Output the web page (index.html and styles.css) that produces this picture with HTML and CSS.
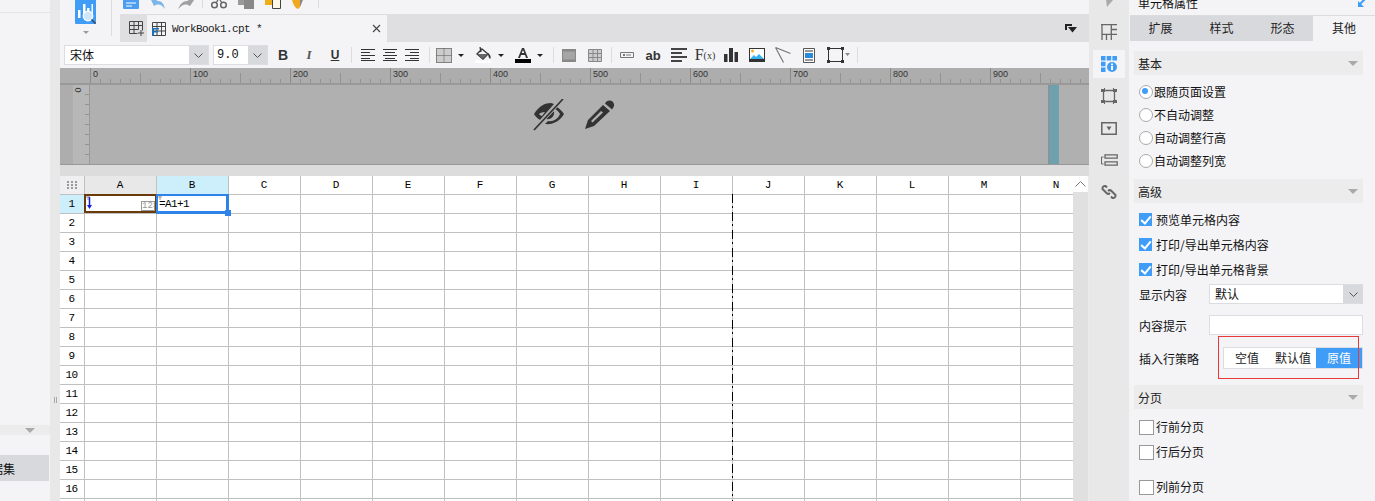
FILE: index.html
```html
<!DOCTYPE html>
<html lang="zh">
<head>
<meta charset="utf-8">
<title>WorkBook1.cpt</title>
<link rel="stylesheet" href="styles.css">
</head>
<body>
<div class="app">
  <aside class="left">
    <div class="left-top"></div>
    <div class="left-fill"></div>
    <div class="left-bar"><i class="tri"></i></div>
    <div class="left-gap"></div>
    <div class="left-item"><span>数据集</span></div>
  </aside>
  <div class="split"><i class="grip"></i></div>
  <main class="center">
    <header class="head">
      <div class="logo-col">
        <svg class="logo" width="21" height="35" viewBox="0 0 21 35"><path d="M0 0h21v24H1a1 1 0 0 1-1-1z" fill="#3f9cf7"/><path d="M3 10h2.500v8H3zM8 4h2.500v10H8zM12 8h2.500v4H12zM16.500 4H18v11h-1.500z" fill="#fff"/><circle cx="13" cy="16" r="4.800" fill="#cfe6fb" stroke="#fff" stroke-width="1.200"/><path d="M16.500 19.500l4 4" stroke="#444" stroke-width="1.500"/><path d="M8 31h6l-3 3z" fill="#999"/></svg>
      </div>
      <div class="head-right">
        <div class="quick">
          <svg class="q q1" width="16" height="9" viewBox="0 0 16 9"><path d="M0 0h16v8a1 1 0 0 1-1 1H1a1 1 0 0 1-1-1z" fill="#4a9df0"/><path d="M3 3h10M3 6h6" stroke="#fff"/></svg>
          <svg class="q q2" width="17" height="9" viewBox="0 0 17 9"><path d="M1 0h5l2 1c4 0 6 3 7 8-3-4-5-5-8-4.500L4 6z" fill="#7db5ea"/></svg>
          <svg class="q q3" width="18" height="9" viewBox="0 0 18 9"><path d="M17 0h-5l-2 1C6 1 3 4 1 9c4-4 6-5 9-4.500L13 6z" fill="#a0a0a0"/></svg>
          <i class="q-div"></i>
          <svg class="q q4" width="16" height="9" viewBox="0 0 16 9"><circle cx="3.500" cy="5" r="2.800" fill="none" stroke="#666" stroke-width="1.500"/><circle cx="12.500" cy="5" r="2.800" fill="none" stroke="#666" stroke-width="1.500"/><path d="M5 3l2-3M11 3L9 0" fill="none" stroke="#666" stroke-width="1.300"/></svg>
          <svg class="q q5" width="16" height="9" viewBox="0 0 16 9"><path d="M0 0h6v5H0z" fill="#999"/><path d="M6 0h10v9H6z" fill="#888"/></svg>
          <svg class="q q6" width="16" height="9" viewBox="0 0 16 9"><path d="M0 0h7v5H0z" fill="#f0ad1a"/><path d="M7.500 0v8.500h8V0" fill="#fff8e5" stroke="#444"/></svg>
          <svg class="q q7" width="12" height="9" viewBox="0 0 12 9"><path d="M0 0h8c1 4 1 7-2 9C3 8 1 4 0 0z" fill="#f0a81e"/><path d="M8 0h3L8 7z" fill="#888"/></svg>
          <i class="q-div q-div2"></i>
        </div>
        <div class="tabbar">
          <div class="newtab">
            <svg width="15" height="15" viewBox="0 0 15 15" fill="none" stroke="#444"><path d="M.5.5h13v9M.5.5v12h8M.5 4.500h13M.5 8.500h9M5 .5v12M9.500.5v8M12 9v6M9 12h6"/></svg>
          </div>
          <div class="tab">
            <svg width="14" height="14" viewBox="0 0 14 14" fill="none"><path d="M.5.5h13v13H.5zM.5 4.500h13M.5 9h13M5 .5v13M9.500.5v13" stroke="#444"/><path d="M0 6h7v1.500H2V9h4v1.500H2V14H0z" fill="#1d6fb8"/></svg>
            <span class="tab-name">WorkBook1.cpt *</span>
            <svg class="tab-x" width="9" height="9" viewBox="0 0 9 9"><path d="M1 1l7 7M8 1L1 8" stroke="#444" stroke-width="1.100"/></svg>
          </div>
          <svg class="tab-menu" width="12" height="9" viewBox="0 0 12 9"><path d="M0 0h7v2H2v4H0z" fill="#222"/><path d="M3 3h9L7.500 8.500z" fill="#222"/></svg>
        </div>
      </div>
    </header>

    <div class="toolbar">
      <div class="combo combo-font"><span class="combo-text">宋体</span><span class="combo-btn"><svg width="9" height="5" viewBox="0 0 9 5"><path d="M.5.5l4 4 4-4" fill="none" stroke="#555"/></svg></span></div>
      <div class="combo combo-size"><span class="combo-text mono">9.0</span><span class="combo-btn"><svg width="9" height="5" viewBox="0 0 9 5"><path d="M.5.5l4 4 4-4" fill="none" stroke="#555"/></svg></span></div>
      <span class="tool w26 t-b">B</span>
      <span class="tool w26 t-i">I</span>
      <span class="tool w26 t-u">U</span>
      <i class="tdiv d1"></i>
      <span class="tool w22"><svg width="14" height="12" viewBox="0 0 14 12"><path d="M0 .5h14M0 3.500h9M0 6.500h14M0 9.500h9M0 11.500h14" stroke="#333"/></svg></span>
      <span class="tool w22"><svg width="14" height="12" viewBox="0 0 14 12"><path d="M0 .5h14M2 3.500h10M0 6.500h14M2 9.500h10M0 11.500h14" stroke="#333"/></svg></span>
      <span class="tool w22"><svg width="14" height="12" viewBox="0 0 14 12"><path d="M0 .5h14M5 3.500h9M0 6.500h14M5 9.500h9M0 11.500h14" stroke="#333"/></svg></span>
      <i class="tdiv d2"></i>
      <span class="tool w38"><svg width="16" height="15" viewBox="0 0 16 15" fill="#ccc"><path d="M.5.5h15v14H.5z" stroke="#222" stroke-dasharray="1 1"/><path d="M.5 7.500h15M8 .5v14" stroke="#555" stroke-dasharray="1 1"/></svg><i class="caret"></i></span>
      <span class="tool w40"><svg width="17" height="16" viewBox="0 0 17 16"><path d="M7 2l6 5-5 5-6-5zM5 0l1 5" fill="none" stroke="#333" stroke-width="1.300"/><path d="M8 7h5l-5 5-6-5z" fill="#666"/><path d="M13 6c3 2 3 5 2 6-1-1-2-3-2-6z" fill="#333"/><path d="M0 13.500h16V16H0z" fill="#fff"/></svg><i class="caret"></i></span>
      <span class="tool w40"><svg width="16" height="16" viewBox="0 0 16 16"><path d="M3 11L7 1h2l4 10h-2l-1-3H6l-1 3zM6.700 6h2.600L8 3z" fill="#333"/><path d="M0 12h16v4H0z" fill="#000"/></svg><i class="caret"></i></span>
      <i class="tdiv d3"></i>
      <span class="tool w26"><svg width="14" height="13" viewBox="0 0 14 13"><path d="M0 0h14v13H0z" fill="#888"/><path d="M1 2.500h12v8H1z" fill="#a5a5a5"/></svg></span>
      <span class="tool w26"><svg width="14" height="13" viewBox="0 0 14 13"><path d="M.5.5h13v12H.5zM.5 4.500h13M.5 8.500h13M5 .5v12M9.500.5v12" fill="#ccc" stroke="#888"/></svg></span>
      <i class="tdiv d4"></i>
      <span class="tool w26"><svg width="14" height="6" viewBox="0 0 14 6"><path d="M.5.5h13v5H.5z" fill="none" stroke="#777"/><path d="M3 2h2v2H3zM6 2.500h5v1H6z" fill="#777"/></svg></span>
      <span class="tool w26 t-ab">ab</span>
      <span class="tool w26"><svg width="16" height="14" viewBox="0 0 16 14"><path d="M0 0h16v2H0zM0 4h11v2H0zM0 8h16v2H0zM0 12h11v2H0z" fill="#444"/></svg></span>
      <span class="tool w26 t-fx">F<small>(x)</small></span>
      <span class="tool w26"><svg width="14" height="14" viewBox="0 0 14 14"><path d="M0 6h3.500v8H0zM5 0h4v14H5zM10.500 4H14v10h-3.500z" fill="#333"/></svg></span>
      <span class="tool w26"><svg width="16" height="14" viewBox="0 0 16 14"><path d="M0 0h16v14H0z" fill="#333"/><path d="M1 1h14v10H1z" fill="#fff"/><path d="M1 11l4-4 2 2 3-3 5 5z" fill="#35b0ee"/><circle cx="3.500" cy="3" r="1.500" fill="#f0b323"/></svg></span>
      <span class="tool w26"><svg width="16" height="16" viewBox="0 0 16 16"><path d="M.5.500l15 6M.5.500l8 15" fill="none" stroke="#777" stroke-width="1.200"/></svg></span>
      <span class="tool w26"><svg width="12" height="15" viewBox="0 0 12 15"><path d="M.5.500h11v14H.5z" fill="#fff" stroke="#555"/><path d="M2 3h8M2 12h8" stroke="#333"/><path d="M2 5h8v5H2z" fill="#2a8bd8"/></svg></span>
      <span class="tool tool-last"><svg width="24" height="16" viewBox="0 0 24 16"><path d="M1.500 1.500h14v13h-14z" fill="none" stroke="#333"/><path d="M0 0h3v3H0zM14 0h3v3h-3zM0 13h3v3H0zM14 13h3v3h-3z" fill="#333"/><path d="M18 6h5l-2.500 3z" fill="#888"/></svg></span>
      <i class="tdiv"></i>
    </div>

    <div class="ruler">
      <span class="seg">0</span><span class="seg">100</span><span class="seg">200</span><span class="seg">300</span><span class="seg">400</span><span class="seg">500</span><span class="seg">600</span><span class="seg">700</span><span class="seg">800</span><span class="seg">900</span>
    </div>
    <div class="canvas">
      <div class="gutter"></div>
      <div class="vruler"><span>0</span></div>
      <div class="page">
        <svg width="32" height="32" viewBox="0 0 32 32"><path d="M1 15C6 7 12 4 18 4l3 1L7 21c-3-2-5-4-6-6zM6 15c1 1 2 2 3 2l3-4c-3 0-5 1-6 2z" fill="#333" fill-rule="evenodd"/><path d="M24 8c3 2 5 4 7 7-4 7-11 11-19 10l3-3c5 1 10-2 12-7-1-2-2-3-5-5z" fill="#333"/><path d="M21 12c1 5-3 9-8 8z" fill="#333"/><path d="M29 1L1 30" stroke="#b0b0b0" stroke-width="3.500"/><path d="M30 0L1 31" stroke="#333" stroke-width="1.700"/></svg>
        <svg width="31" height="31" viewBox="0 0 31 31"><path d="M22 3a4.500 4.500 0 0 1 7 6l-1 1.500-7-6zM19 6l7 6-16 15-9 3 3-9zM17 12L7 22l1.500 1.500L19 13.500z" fill="#333" fill-rule="evenodd"/></svg>
      </div>
      <div class="strip"></div>
      <div class="rest"></div>
    </div>
    <div class="band"></div>

    <div class="sheet">
      <div class="sheet-main">
        <div class="col-head">
          <div class="corner"><svg width="10" height="8" viewBox="0 0 10 8"><path d="M0 0h2v2H0zM4 0h2v2H4zM8 0h2v2H8zM0 3h2v2H0zM4 3h2v2H4zM8 3h2v2H8zM0 6h2v2H0zM4 6h2v2H4zM8 6h2v2H8z" fill="#999"/></svg></div>
          <div class="ch ch-a">A</div><div class="ch ch-b">B</div><div class="ch">C</div><div class="ch">D</div><div class="ch">E</div><div class="ch">F</div><div class="ch">G</div><div class="ch">H</div><div class="ch">I</div><div class="ch">J</div><div class="ch">K</div><div class="ch">L</div><div class="ch">M</div><div class="ch">N</div>
        </div>
        <div class="sheet-body">
          <div class="row-head">
            <div class="rh rh-on">1</div><div class="rh">2</div><div class="rh">3</div><div class="rh">4</div><div class="rh">5</div><div class="rh">6</div><div class="rh">7</div><div class="rh">8</div><div class="rh">9</div><div class="rh">10</div><div class="rh">11</div><div class="rh">12</div><div class="rh">13</div><div class="rh">14</div><div class="rh">15</div><div class="rh">16</div><div class="rh"></div>
          </div>
          <div class="cells">
            <div class="first-row">
              <div class="cell-a">
                <svg class="mark" width="4" height="4" viewBox="0 0 4 4"><path d="M0 1h4M2 0v4" stroke="#999"/></svg>
                <svg class="down" width="5" height="12" viewBox="0 0 5 12"><path d="M2.500 0v9" stroke="#1320d8" stroke-width="1.500"/><path d="M0 8h5l-2.500 4z" fill="#1320d8"/></svg>
                <span class="badge">123</span>
              </div>
              <div class="cell-b"><svg class="mark" width="4" height="4" viewBox="0 0 4 4"><path d="M0 1h4M2 0v4" stroke="#999"/></svg>=A1+1<i class="handle"></i></div>
            </div>
            <i class="page-break"></i>
          </div>
        </div>
      </div>
      <div class="scroll"><div class="scroll-up"><svg width="11" height="6" viewBox="0 0 11 6"><path d="M.5 5.500l5-5 5 5" fill="none" stroke="#777"/></svg></div></div>
    </div>
  </main>

  <nav class="iconbar">
    <svg class="top-tri" width="7" height="7" viewBox="0 0 7 7"><path d="M0 0h7L1 7z" fill="#aaa"/></svg>
    <span class="ib ib1"><svg width="16" height="16" viewBox="0 0 16 16" fill="none" stroke="#666" stroke-width="1.300"><path d="M0 .7h16M1 0v16M1 10.300h15M5.500 10.300V16M10.300.7V16M10.300 5.500H16"/></svg></span>
    <span class="ib ib-on"><svg width="16" height="16" viewBox="0 0 16 16"><path d="M0 0h4.500v4.500H0zM5.700 0h4.500v4.500H5.700zM11.400 0H16v4.500h-4.600zM0 5.700h4.500v4.500H0zM0 11.400h4.500V16H0z" fill="#3f9cf7"/><circle cx="11" cy="11" r="5" fill="#3f9cf7"/><path d="M10 7.500h2v1.700h-2zM10 10h2v4h-2z" fill="#fff"/></svg></span>
    <span class="ib"><svg width="16" height="16" viewBox="0 0 16 16"><path d="M2.500 2.500h11v11h-11z" fill="none" stroke="#666" stroke-width="1.300"/><path d="M0 1h3V0h1v4H0zM12 0h1v1h3v3h-4zM0 12h4v4H3v-1H0zM12 12h4v3h-3v1h-1z" fill="#666"/></svg></span>
    <span class="ib"><svg width="16" height="13" viewBox="0 0 16 13"><path d="M.8.800h14.400v11.400H.8z" fill="none" stroke="#666" stroke-width="1.500"/><path d="M5.500 4.500h5L8 8.500z" fill="#666"/></svg></span>
    <span class="ib"><svg width="17" height="12" viewBox="0 0 17 12"><path d="M4 .8h12.200v3.400H4zM4 7.800h12.200v3.400H4z" fill="none" stroke="#666" stroke-width="1.300"/><path d="M2.500 3H.5v7h2" fill="none" stroke="#666"/></svg></span>
    <span class="ib"><svg width="16" height="16" viewBox="0 0 16 16" fill="none" stroke="#666" stroke-width="2"><path d="M6 3.500l-1.500-1.500a2.500 2.500 0 0 0-3 3l4 4a2.500 2.500 0 0 0 3.500 0"/><path d="M10 12.500l1.500 1.500a2.500 2.500 0 0 0 3-3l-4-4a2.500 2.500 0 0 0-3.500 0"/></svg></span>
  </nav>

  <section class="props">
    <div class="props-title">
      <span>单元格属性</span>
      <svg class="dock" width="9" height="7" viewBox="0 0 9 7"><path d="M8 -2L2 4" stroke="#3f9cf7" stroke-width="2"/><path d="M0 1v6h6z" fill="#3f9cf7"/></svg>
    </div>
    <div class="tabs">
      <span class="ptab">扩展</span><span class="ptab">样式</span><span class="ptab">形态</span><span class="ptab ptab-on">其他</span>
    </div>

    <div class="sec sec-first">基本<i class="tri"></i></div>
    <ul class="radios">
      <li class="radio on">跟随页面设置</li>
      <li class="radio">不自动调整</li>
      <li class="radio">自动调整行高</li>
      <li class="radio">自动调整列宽</li>
    </ul>

    <div class="sec sec-adv">高级<i class="tri"></i></div>
    <ul class="checks">
      <li class="check on">预览单元格内容</li>
      <li class="check on">打印/导出单元格内容</li>
      <li class="check on">打印/导出单元格背景</li>
    </ul>
    <div class="field f-show">
      <label>显示内容</label>
      <div class="pselect"><span>默认</span><b><svg width="9" height="5" viewBox="0 0 9 5"><path d="M.5.5l4 4 4-4" fill="none" stroke="#555"/></svg></b></div>
    </div>
    <div class="field f-tip">
      <label>内容提示</label>
      <div class="pinput"></div>
    </div>
    <div class="field f-seg">
      <label>插入行策略</label>
      <div class="segwrap">
        <div class="seg-group"><span class="sg sg1">空值</span><span class="sg sg2">默认值</span><span class="sg sg3">原值</span></div>
        <i class="redbox"></i>
      </div>
    </div>

    <div class="sec sec-page">分页<i class="tri"></i></div>
    <ul class="checks checks-page">
      <li class="check">行前分页</li>
      <li class="check">行后分页</li>
      <li class="check check-gap">列前分页</li>
    </ul>
  </section>
</div>
</body>
</html>
```
FILE: styles.css
```css
* { box-sizing: border-box; }
html, body { margin: 0; height: 501px; overflow: hidden; }
body { background: #f4f4f7; color: #111; font: 12px "Noto Sans CJK SC", "Liberation Sans", sans-serif; }
ul { list-style: none; margin: 0; padding: 0; }
svg { display: block; flex: none; }

.app { display: flex; width: 1375px; height: 501px; overflow: hidden; }

/* left panel */
.left { width: 50px; display: flex; flex-direction: column; flex: none; }
.left-top { height: 13px; border-bottom: 1px solid #e4e4e6; }
.left-fill { height: 412px; }
.left-bar { height: 10px; background: #ececec; display: flex; justify-content: flex-end; align-items: center; padding-right: 15px; }
.left-gap { height: 20px; }
.left-item { height: 26px; width: 49px; background: #d8d9dd; overflow: hidden; display: flex; justify-content: flex-end; align-items: center; padding-right: 34px; white-space: nowrap; font-size: 12px; color: #111; }
.left-item span { flex: none; }
.tri { display: block; width: 0; height: 0; border: 5px solid transparent; border-top: 5px solid #aaa; border-bottom: 0; }
.split { width: 10px; flex: none; background: #e8e8e8; display: flex; align-items: flex-start; justify-content: center; padding-top: 397px; }
.grip { display: block; width: 3px; height: 6px; border-left: 1px solid #aaa; border-right: 1px solid #aaa; }

/* centre */
.center { width: 1029px; flex: none; display: flex; flex-direction: column; }
.head { height: 42px; display: flex; }
.logo-col { width: 52px; height: 36px; flex: none; border-right: 1px solid #dcdcdc; padding-left: 15px; margin-right: 8px; }
.head-right { flex: 1; display: flex; flex-direction: column; }
.quick { height: 14px; display: flex; align-items: flex-start; padding-left: 3px; }
.q2 { margin-left: 11px; }
.q3 { margin-left: 10px; }
.q-div { display: block; width: 1px; height: 8px; background: #dcdcdc; margin-left: 7px; }
.q4 { margin-left: 8px; }
.q5 { margin-left: 11px; }
.q6 { margin-left: 11px; }
.q7 { margin-left: 11px; }
.q-div2 { margin-left: 14px; }
.tabbar { height: 28px; background: #dfdfe1; display: flex; align-items: center; }
.newtab { width: 27px; height: 28px; display: flex; align-items: center; padding-left: 9px; }
.tab { width: 240px; height: 28px; background: #f4f4f7; border-top: 1px solid #dcdcdc; display: flex; align-items: center; padding-left: 5px; }
.tab-name { font: 11px "Liberation Mono", monospace; letter-spacing: -0.6px; margin-left: 6px; color: #222; white-space: pre; }
.tab-x { margin-left: auto; margin-right: 6px; }
.tab-menu { margin-left: auto; margin-right: 12px; }

/* toolbar */
.toolbar { height: 26px; display: flex; align-items: center; padding-left: 4px; }
.combo { height: 20px; display: flex; border: 1px solid #dcdde0; background: #fff; flex: none; }
.combo-font { width: 145px; }
.combo-size { width: 55px; margin-left: 4px; margin-right: 2px; }
.combo-text { flex: 1; padding-left: 5px; line-height: 18px; font-size: 12px; color: #111; }
.combo-text.mono { font: 12px/18px "Liberation Mono", monospace; padding-left: 3px; }
.combo-btn { width: 19px; background: #d8d9dd; display: flex; align-items: center; justify-content: center; }
.tool { display: flex; align-items: center; justify-content: center; flex: none; height: 20px; color: #333; }
.w22 { width: 22px; }
.w26 { width: 26px; }
.w38 { width: 38px; gap: 6px; justify-content: flex-start; padding-left: 1px; }
.w40 { width: 40px; gap: 6px; justify-content: flex-start; padding-left: 2px; }
.tool-last { width: 35px; padding-left: 5px; justify-content: flex-start; }
.t-b { font: bold 14px "Liberation Sans", sans-serif; }
.t-i { font: italic bold 13px "Liberation Serif", serif; color: #555; }
.t-u { font: bold 12px "Liberation Sans", sans-serif; text-decoration: underline; }
.t-ab { font: bold 13px "Liberation Sans", sans-serif; }
.t-fx { font: 16px "Liberation Serif", serif; }
.t-fx small { font-size: 10px; font-weight: 400; }
.caret { display: block; width: 0; height: 0; border: 3px solid transparent; border-top: 3px solid #222; border-bottom: 0; }
.tdiv { display: block; width: 1px; height: 16px; background: #dcdcdc; flex: none; }
.d1 { margin: 0 5px 0 3px; }
.d2 { margin: 0 5px 0 6px; }
.d3 { margin: 0 2px 0 0; }
.d4 { margin: 0 2px 0 3px; }

/* ruler */
.ruler {
  height: 17px; display: flex; padding-left: 30px; background-color: #adadad; border-bottom: 2px solid #999; overflow: hidden;
}
.seg {
  flex: none; width: 100px; height: 15px; padding: 1px 0 0 2px; border-left: 1px solid #8a8a8a;
  font: 9px/10px "Liberation Sans", sans-serif; color: #333;
  background-image:
    repeating-linear-gradient(to right, transparent 0 9px, #939393 9px 10px),
    repeating-linear-gradient(to right, transparent 0 49px, #939393 49px 50px);
  background-size: 100% 4px, 100% 10px;
  background-position: 0 100%, 0 100%;
  background-repeat: no-repeat;
}
.canvas { height: 80px; display: flex; background: #b0b0b0; border-bottom: 1px solid #999; }
.gutter { width: 13px; flex: none; background: #adadad; }
.vruler {
  width: 17px; flex: none; text-align: left; font: 9px/10px "Liberation Sans", sans-serif; color: #333; border-right: 1px solid #999; background-color: #b7b7b7;
  background-image: repeating-linear-gradient(to bottom, transparent 0 9px, #939393 9px 10px);
  background-size: 4px 100%; background-position: 100% 0; background-repeat: no-repeat;
}
.vruler span { display: block; width: 10px; text-align: center; transform: rotate(90deg); margin-top: 0; }
.page { width: 959px; flex: none; display: flex; justify-content: center; gap: 19px; padding: 14px 0 0 9px; border-right: 1px solid #8f8f8f; }
.strip { width: 10px; flex: none; background: #6fa0ad; }
.rest { flex: 1; }
.band { height: 11px; background: #dcdcdc; }

/* sheet */
.sheet { flex: 1; display: flex; min-height: 0; background: #fff; }
.sheet-main { flex: 1; min-width: 0; overflow: hidden; }
.col-head { display: flex; height: 19px; border-bottom: 1px solid #c0c0c0; }
.corner { width: 25px; flex: none; background: #efeff1; border-right: 1px solid #c0c0c0; display: flex; align-items: center; justify-content: center; }
.ch { width: 72px; flex: none; border-right: 1px solid #c0c0c0; padding-right: 1px; text-align: center; font: 11px/19px "Liberation Mono", monospace; color: #000; }
.ch-a { background: #e8e8e8; }
.ch-b { background: #cdeefb; }
.sheet-body { display: flex; }
.row-head { width: 25px; flex: none; }
.rh { height: 19px; border-right: 1px solid #c0c0c0; border-bottom: 1px solid #c0c0c0; padding-right: 1px; text-align: center; font: 11px/19px "Liberation Mono", monospace; letter-spacing: -0.6px; color: #000; }
.rh-on { background: #cdeefb; }
.cells {
  flex: 1; position: relative; height: 310px;
  background-image:
    repeating-linear-gradient(to right, transparent 0 71px, #c0c0c0 71px 72px),
    repeating-linear-gradient(to bottom, transparent 0 18px, #c0c0c0 18px 19px);
}
.first-row { display: flex; height: 19px; margin-left: -1px; }
.cell-a { width: 73px; height: 19px; margin-top: -1px; border: 2px solid #6b3a0a; background: #fff; position: relative; }
.mark { position: absolute; left: 0; top: 0; }
.down { position: absolute; left: 1px; top: 1px; }
.badge { position: absolute; right: 0; bottom: 0; width: 14px; height: 10px; border: 1px solid #999; font: 9px/9px "Liberation Mono", monospace; color: #999; overflow: hidden; white-space: nowrap; }
.cell-b { width: 73px; height: 20px; margin: -1px 0 0 -1px; border: solid #2f83e8; border-width: 2px 3px 3px 2px; background: #fff; font: 11px/16px "Liberation Mono", monospace; letter-spacing: -0.6px; color: #000; padding-left: 1px; position: relative; }
.handle { position: absolute; right: -5px; bottom: -5px; width: 6px; height: 6px; background: #2f83e8; }
.page-break { position: absolute; left: 647px; top: -1px; bottom: 0; width: 1px; background-image: linear-gradient(to bottom, #000 0 9px, transparent 9px 12px, #000 12px 14px, transparent 14px 18px); background-size: 1px 18px; }
.scroll { width: 16px; flex: none; background: #e0e0e0; border-right: 1px solid #ececec; }
.scroll-up { height: 16px; background: #fff; display: flex; align-items: center; justify-content: center; }

/* icon bar */
.iconbar { width: 40px; flex: none; background: #e8e8e8; display: flex; flex-direction: column; align-items: center; }
.top-tri { height: 7px; margin-bottom: 16px; }
.ib { width: 32px; height: 32px; display: flex; align-items: center; justify-content: center; }
.ib1 { height: 17px; margin-bottom: 10px; }
.ib-on { height: 28px; background: #f4f4f7; margin-bottom: 2px; }

/* properties panel */
.props { width: 246px; flex: none; }
.props-title { height: 15px; margin-top: -4px; display: flex; justify-content: space-between; padding: 0 8px 0 9px; line-height: 13px; }
.dock { margin-top: 4px; }
.tabs { display: flex; margin: 4px 0 0 1px; height: 26px; border-top: 1px solid #dcdcdc; background: #d8d9dd; }
.ptab { width: 61px; text-align: center; line-height: 24px; color: #222; flex: none; }
.ptab-on { background: #f4f4f7; width: 62px; }
.sec { height: 24px; margin: 0 12px 0 5px; background: #ececec; padding: 1px 5px 0 4px; line-height: 23px; display: flex; justify-content: space-between; align-items: center; color: #222; }
.sec-first { margin-top: 10px; }
.radios { padding: 5px 0 0 10px; }
.radio { height: 23px; line-height: 23px; padding-left: 15px; position: relative; }
.radio::before { content: ""; position: absolute; left: 0; top: 5px; width: 12px; height: 12px; border-radius: 50%; border: 1px solid #aaa; background: #fff; }
.radio.on::after { content: ""; position: absolute; left: 3px; top: 8px; width: 6px; height: 6px; border-radius: 50%; background: #3f9cf7; }
.sec-adv { margin-top: 7px; }
.checks { padding: 4px 0 0 10px; }
.check { height: 25px; line-height: 25px; padding-left: 17px; position: relative; }
.check::before { content: ""; position: absolute; left: 0; top: 6px; width: 13px; height: 13px; border: 1px solid #999; background: #fff; }
.check.on::before { border: 0; background: #3f9cf7; }
.check.on::after { content: ""; position: absolute; left: 4px; top: 7px; width: 4px; height: 8px; border: solid #fff; border-width: 0 2px 2px 0; transform: rotate(40deg); }
.field { display: flex; align-items: center; padding-left: 10px; }
.field label { width: 70px; flex: none; }
.f-show { height: 22px; margin-top: 1px; }
.f-tip { height: 22px; margin-top: 9px; }
.f-seg { height: 22px; margin-top: 11px; }
.pselect { width: 154px; height: 20px; display: flex; border: 1px solid #dcdde0; background: #fff; padding-left: 5px; line-height: 18px; justify-content: space-between; }
.pselect b { width: 20px; background: #d8d9dd; display: flex; align-items: center; justify-content: center; margin-right: -1px; }
.pinput { width: 154px; height: 20px; border: 1px solid #dcdde0; background: #fff; }
.segwrap { position: relative; margin-left: 14px; }
.seg-group { width: 140px; height: 22px; display: flex; border: 1px solid #dcdde0; background: #fff; line-height: 20px; text-align: center; color: #222; }
.sg1 { width: 40px; padding-left: 6px; }
.sg2 { width: 52px; padding-left: 6px; }
.sg3 { flex: 1; background: #3f9cf7; color: #fff; }
.redbox { position: absolute; left: -5px; top: -11px; width: 141px; height: 43px; border: 1px solid #e8393a; }
.sec-page { margin-top: 16px; }
.checks-page { padding-top: 5px; }
.check-gap { margin-top: 10px; }
```
